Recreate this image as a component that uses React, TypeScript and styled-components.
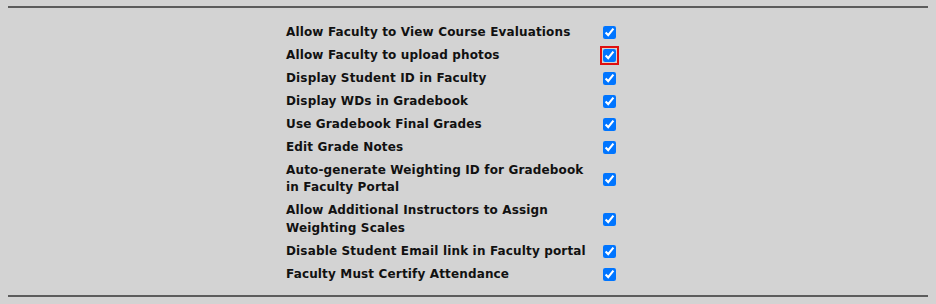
import React from "react";
import styled, { createGlobalStyle } from "styled-components";

const GlobalStyle = createGlobalStyle`
  html, body {
    margin: 0;
    background: #d3d3d3;
  }
`;

const Page = styled.div`
  padding: 6px 8px 0;
  height: 304px;
  box-sizing: border-box;
  font-family: "DejaVu Sans", Lato, sans-serif;
`;

const Rule = styled.div`
  height: 2px;
  background: #5c5c5c;
`;

const Settings = styled.div`
  display: flex;
  flex-direction: column;
  width: 364px;
  margin: 13px auto 9px;
`;

const Row = styled.label`
  display: grid;
  grid-template-columns: 317px 47px;
  align-items: center;
  min-height: 23px;
  padding: 2.75px 0;
  box-sizing: border-box;
`;

const Label = styled.span`
  font-size: 12px;
  font-weight: 700;
  letter-spacing: 0.15px;
  line-height: 17.5px;
  color: #111;
  padding-right: 10px;
`;

const Check = styled.input<{ $focused?: boolean }>`
  width: 13px;
  height: 13px;
  margin: 0;
  accent-color: #0075ff;
  outline: ${(p) => (p.$focused ? "2px solid #e01010" : "none")};
  outline-offset: 1px;
`;

const settings = [
  "Allow Faculty to View Course Evaluations",
  "Allow Faculty to upload photos",
  "Display Student ID in Faculty",
  "Display WDs in Gradebook",
  "Use Gradebook Final Grades",
  "Edit Grade Notes",
  "Auto-generate Weighting ID for Gradebook in Faculty Portal",
  "Allow Additional Instructors to Assign Weighting Scales",
  "Disable Student Email link in Faculty portal",
  "Faculty Must Certify Attendance",
];

export default function App() {
  return (
    <>
      <GlobalStyle />
      <Page>
        <Rule />
        <Settings>
          {settings.map((text, i) => (
            <Row key={text}>
              <Label>{text}</Label>
              <Check type="checkbox" defaultChecked $focused={i === 1} />
            </Row>
          ))}
        </Settings>
        <Rule />
      </Page>
    </>
  );
}
